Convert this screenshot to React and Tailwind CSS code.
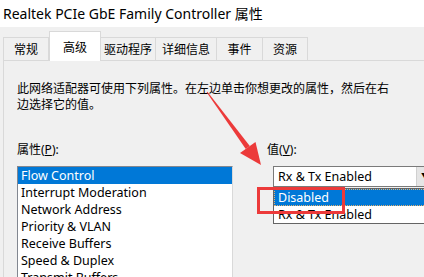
import React from 'react'

const font = { fontFamily: '"Noto Sans", "Noto Sans CJK SC", sans-serif' }

const tabs = [
  { label: '常规', w: 'w-[46px]' },
  { label: '高级', w: 'w-[52px]', active: true },
  { label: '驱动程序', w: 'w-[56px]' },
  { label: '详细信息', w: 'w-[62px]' },
  { label: '事件', w: 'w-[47px]' },
  { label: '资源', w: 'w-[46px]' }
]

const props = [
  'Flow Control',
  'Interrupt Moderation',
  'Network Address',
  'Priority & VLAN',
  'Receive Buffers',
  'Speed & Duplex',
  'Transmit Buffers'
]

export default function App() {
  return (
    <div
      className="relative h-[277px] w-[424px] overflow-hidden bg-[#f0f0f0] text-black"
      style={font}
    >
      {/* Title bar */}
      <div className="flex h-[27px] items-center bg-white pl-[3px] text-[14px]">
        Realtek PCIe GbE Family Controller 属性
      </div>

      {/* Tabs */}
      <div className="flex h-[33px] items-end pl-[3px]">
        {tabs.map((t) =>
          t.active ? (
            <div
              key={t.label}
              className={`${t.w} z-10 -mb-px flex h-[30px] shrink-0 items-start justify-center border border-b-0 border-[#d9d9d9] bg-white pt-[7px] text-[12px]`}
            >
              {t.label}
            </div>
          ) : (
            <div
              key={t.label}
              className={`${t.w} -ml-px flex h-[23px] shrink-0 items-center justify-center border border-b-0 border-[#d9d9d9] bg-[#f0f0f0] pt-[2px] text-[12px] first:ml-0`}
            >
              {t.label}
            </div>
          )
        )}
      </div>

      {/* Panel */}
      <div className="ml-[3px] h-[300px] border-l border-t border-[#d9d9d9] pl-[13px] pt-[20px] text-[12px] leading-[16px]">
        <p className="whitespace-nowrap">
          此网络适配器可使用下列属性。在左边单击你想更改的属性，然后在右
          <br />
          边选择它的值。
        </p>

        <div className="mt-[29px] flex">
          {/* Left column */}
          <div className="flex w-[216px] shrink-0 flex-col">
            <div>
              属性(<span className="underline">P</span>):
            </div>
            <div className="mt-[8px] h-[140px] border border-[#828790] border-r-[#d9d9d9] bg-white text-[12.5px] leading-[17px]">
              {props.map((p, i) => (
                <div
                  key={p}
                  className={`h-[17px] whitespace-nowrap pl-[3px] ${
                    i === 0 ? 'bg-[#0078d7] text-white' : ''
                  }`}
                >
                  {p}
                </div>
              ))}
            </div>
          </div>

          {/* Right column */}
          <div className="ml-[34px] flex shrink-0 flex-col">
            <div>
              值(<span className="underline">V</span>):
            </div>
            <div className="relative mt-[8px] ml-[6px] w-[160px]">
              <div className="flex h-[21px] items-center border border-[#7a7a7a] bg-white text-[12.5px]">
                <span className="flex-1 whitespace-nowrap pl-[4px]">Rx &amp; Tx Enabled</span>
                <div className="flex h-full w-[16px] items-center border-l border-[#d0d0d0] bg-[#e5e5e5] pl-[4px] text-[9px]">
                  ▼
                </div>
              </div>
              {/* Dropdown menu */}
              <div className="absolute left-0 top-[22px] w-[160px] border border-[#646464] bg-white text-[12.5px] leading-[17px]">
                <div className="h-[17px] border border-dotted border-[#e0b070] bg-[#0078d7] pl-[3px] leading-[15px] text-white">
                  Disabled
                </div>
                <div className="h-[17px] pl-[4px]">Rx &amp; Tx Enabled</div>
              </div>
            </div>
          </div>
        </div>
      </div>

      {/* Red highlight box */}
      <div className="absolute left-[257px] top-[187px] h-[27px] w-[88px] border-[3px] border-[#ec3a3a]" />

      {/* Red arrow */}
      <svg className="absolute left-0 top-0" width="424" height="277">
        <polygon
          points="206.6,92.3 207.4,91.7 249.8,145.9 245.8,148.9"
          fill="#ec3a3a"
        />
        <polygon points="261,165 255.5,142 240,153" fill="#ec3a3a" />
      </svg>
    </div>
  )
}
